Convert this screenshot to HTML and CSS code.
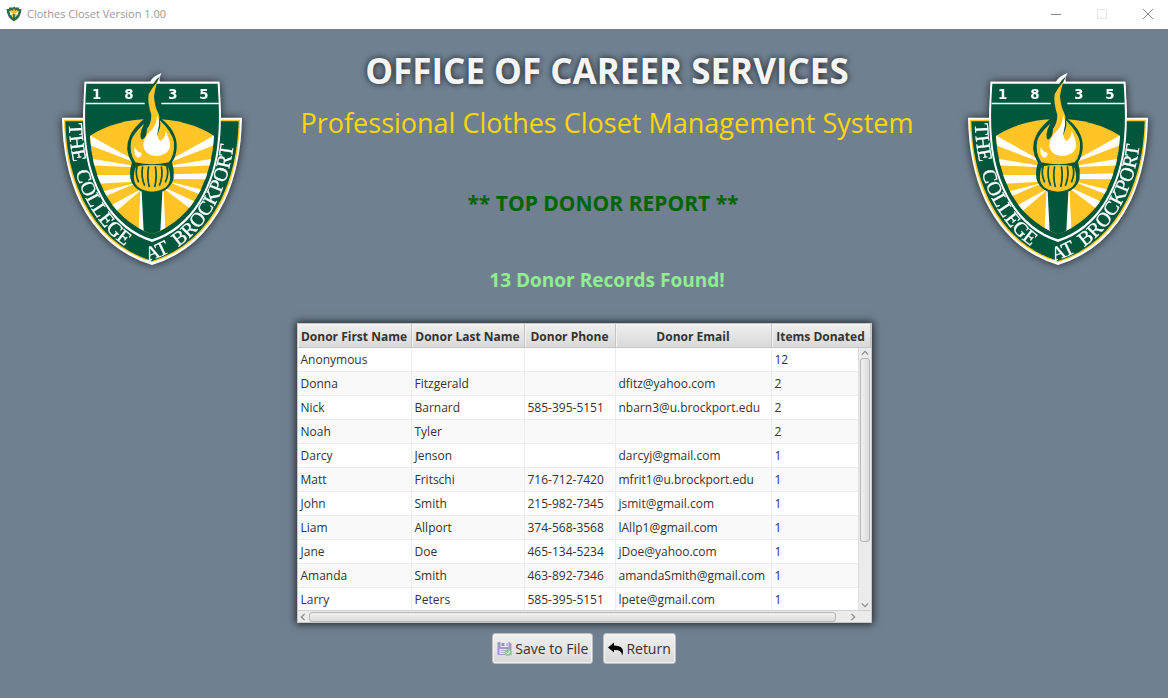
FILE: index.html
```html
<!DOCTYPE html>
<html lang="en">
<head>
<meta charset="utf-8">
<title>Clothes Closet Version 1.00</title>
<link rel="stylesheet" href="styles.css">
</head>
<body>
<svg class="defs" aria-hidden="true">
  <defs>
    <clipPath id="field"><path d="M120 212Q200 162 306 162T492 212Q488 300 452 375Q405 470 306 508Q207 470 160 375Q124 300 120 212Z"/></clipPath>
    <path id="ribbon" d="M56 172C62 290 85 385 150 470C195 530 245 563 306 584C367 563 417 530 462 470C527 385 550 290 557 172"/>
    <symbol id="crest" viewBox="0 0 600 630">
      <path class="white" d="M36 158H100L104 50H300Q306 36 334 24Q326 44 330 50H508L513 158H576Q574 300 524 408Q452 556 306 600Q160 556 88 408Q38 300 36 158Z"/>
      <path class="gold" d="M42 164H570Q568 300 518 406Q448 548 306 592Q164 548 94 406Q44 300 42 164Z"/>
      <path class="green" d="M46 169H566Q563 300 513 404Q444 544 306 588Q168 544 99 404Q49 300 46 169Z"/>
      <path class="white" d="M104 50H508Q516 160 510 220Q502 330 450 415Q396 503 306 531Q216 503 162 415Q110 330 102 220Q96 160 104 50Z"/>
      <path class="green" d="M109 56H503Q510 160 504 220Q496 328 446 410Q392 495 306 523Q220 495 166 410Q116 328 108 220Q102 160 109 56Z"/>
      <path class="white" d="M107 113H284V118H107ZM334 113H506V118H334Z"/>
      <g clip-path="url(#field)">
        <path class="gold" d="M100 150H510V520H100Z"/>
        <path class="white" d="M290 306L110 206V237ZM290 308L110 279V300ZM250 330V350L130 357V330ZM265 352L140 384L152 400ZM285 365L168 430L190 446ZM272 365L265 510H284L280 365ZM322 306L502 206V237ZM322 308L502 279V300ZM362 328V342L482 343V325ZM347 347L472 378L464 394ZM327 360L452 418L430 438ZM340 365L347 510H328L332 365Z"/>
        <path class="green" d="M274 360H338L330 520H282Z"/>
      </g>
      <path class="green" d="M246 294Q220 252 240 212Q250 190 284 160L292 110Q288 78 308 60Q314 46 330 34L314 66Q308 82 320 110Q330 128 332 160Q384 200 380 250Q378 276 366 292Q374 316 371 340Q361 382 306 387Q251 382 241 340Q238 312 246 294Z"/>
      <path class="gold" d="M256 292Q236 264 244 226Q250 206 282 176Q264 214 276 224Q290 220 291 192Q304 174 304 150Q292 112 296 88Q304 70 322 50Q314 74 312 94Q314 124 325 145Q334 166 318 187Q310 204 316 216Q324 212 326 198Q334 182 329 165Q366 200 372 232Q374 274 356 292Q306 304 256 292Z"/>
      <path class="white" d="M280 242Q280 218 304 196Q322 176 321 150Q332 170 324 194Q318 220 332 228Q346 220 347 198Q364 234 359 250Q348 273 317 273Q284 270 280 242ZM254 246Q262 262 275 264Q274 278 264 278Q250 274 254 246Z"/>
      <path class="gold" d="M259 304Q306 296 353 304Q358 312 360 328Q366 376 306 380Q246 376 252 328Q254 312 259 304Z"/>
      <path class="ribs" d="M262 302Q254 326 266 352M278 304Q272 334 284 362M296 304Q290 334 298 366M316 304Q322 334 314 366M334 304Q340 334 328 362M350 302Q358 326 346 352"/>
      <g class="year"><text x="140" y="101">1</text><text x="237" y="101">8</text><text x="369" y="101">3</text><text x="462" y="101">5</text></g>
      <g class="motto">
        <text><textPath href="#ribbon" startOffset="4">THE</textPath></text>
        <text><textPath href="#ribbon" startOffset="150">COLLEGE</textPath></text>
        <text><textPath href="#ribbon" startOffset="500">AT</textPath></text>
        <text><textPath href="#ribbon" startOffset="602">BROCKPORT</textPath></text>
      </g>
    </symbol>
  </defs>
</svg>

<header class="titlebar">
  <svg class="app-icon" viewBox="0 0 16 16" aria-hidden="true"><path fill="#2c6b50" d="M3 1.500H7L8.500.5L9 1.500H13V3H15.500Q15 12 8 15.500Q1 12 .5 3H3Z"/><path fill="#f2c12e" d="M3.500 5Q8 2 12.500 5Q12 10 8 12.500Q4 10 3.500 5Z"/><path fill="#fff" d="M3.500 5L7 8L4.500 9ZM12.500 5L9 8L11.500 9Z"/><path fill="#0b5d43" d="M7.300 8H8.700V13H7.300ZM6.500 3H9.500V5H6.500Z"/><path fill="#f2c12e" d="M8 2L9.500 6Q9 8 8 8T6.500 6Z"/></svg>
  <span class="app-name">Clothes Closet Version 1.00</span>
  <div class="window-controls">
    <button type="button" aria-label="Minimize"><svg viewBox="0 0 12 12"><path stroke="#888" d="M1 6.500H11"/></svg></button>
    <button type="button" aria-label="Maximize" disabled><svg viewBox="0 0 12 12"><path stroke="#e4e4e4" d="M1.500 1.500H10.500V10.500H1.500Z"/></svg></button>
    <button type="button" aria-label="Close"><svg viewBox="0 0 12 12"><path stroke="#888" d="M1 1L11 11M11 1L1 11"/></svg></button>
  </div>
</header>

<main>
  <section class="banner">
    <svg class="crest" role="img" aria-label="College crest"><use href="#crest"/></svg>
    <div class="headings">
      <h1>OFFICE OF CAREER SERVICES</h1>
      <p class="system">Professional Clothes Closet Management System</p>
      <h2>** TOP DONOR REPORT **</h2>
      <p class="status">13 Donor Records Found!</p>
    </div>
    <svg class="crest" role="img" aria-label="College crest"><use href="#crest"/></svg>
  </section>

  <section class="panel">
    <div class="viewport">
      <table>
        <colgroup><col class="c-first"><col class="c-last"><col class="c-phone"><col class="c-email"><col class="c-items"></colgroup>
        <thead><tr><th>Donor First Name</th><th>Donor Last Name</th><th>Donor Phone</th><th>Donor Email</th><th>Items Donated</th></tr></thead>
        <tbody>
          <tr><td>Anonymous</td><td></td><td></td><td></td><td>12</td></tr>
          <tr><td>Donna</td><td>Fitzgerald</td><td></td><td>dfitz@yahoo.com</td><td>2</td></tr>
          <tr><td>Nick</td><td>Barnard</td><td>585-395-5151</td><td>nbarn3@u.brockport.edu</td><td>2</td></tr>
          <tr><td>Noah</td><td>Tyler</td><td></td><td></td><td>2</td></tr>
          <tr><td>Darcy</td><td>Jenson</td><td></td><td>darcyj@gmail.com</td><td>1</td></tr>
          <tr><td>Matt</td><td>Fritschi</td><td>716-712-7420</td><td>mfrit1@u.brockport.edu</td><td>1</td></tr>
          <tr><td>John</td><td>Smith</td><td>215-982-7345</td><td>jsmit@gmail.com</td><td>1</td></tr>
          <tr><td>Liam</td><td>Allport</td><td>374-568-3568</td><td>lAllp1@gmail.com</td><td>1</td></tr>
          <tr><td>Jane</td><td>Doe</td><td>465-134-5234</td><td>jDoe@yahoo.com</td><td>1</td></tr>
          <tr><td>Amanda</td><td>Smith</td><td>463-892-7346</td><td>amandaSmith@gmail.com</td><td>1</td></tr>
          <tr><td>Larry</td><td>Peters</td><td>585-395-5151</td><td>lpete@gmail.com</td><td>1</td></tr>
        </tbody>
      </table>
      <div class="scroll vertical">
        <svg viewBox="0 0 10 6"><path d="M1 5L5 1L9 5"/></svg>
        <div class="track"><div class="thumb"></div></div>
        <svg viewBox="0 0 10 6"><path d="M1 1L5 5L9 1"/></svg>
      </div>
    </div>
    <div class="scroll horizontal">
      <svg viewBox="0 0 6 10"><path d="M5 1L1 5L5 9"/></svg>
      <div class="track"><div class="thumb"></div></div>
      <svg viewBox="0 0 6 10"><path d="M1 1L5 5L1 9"/></svg>
    </div>
  </section>

  <div class="actions">
    <button type="button"><svg class="icon" viewBox="0 0 14 14" aria-hidden="true"><path fill="#a596c8" d="M0 0H12L14 2V13H0Z"/><path fill="#e9e5f3" d="M3 0H11V5H3ZM2 7H12V12H2Z"/><path fill="#8b98ad" d="M4 1H10V4H4Z"/><path fill="#e9edf3" d="M7 1H9V4H7Z"/><path stroke="#b3a9cc" d="M3 8.500H11M3 10.500H8"/><circle cx="10.500" cy="10.500" r="3.500" fill="#8fca98"/><path fill="none" stroke="#fff" d="M9 10.500L10.300 12L12.300 9.300"/></svg>Save to File</button>
    <button type="button"><svg class="icon" viewBox="0 0 15 13" aria-hidden="true"><path d="M0 5L6 0V3Q15 3 15 9Q15 11 14 13Q14 7 6 7.500V10Z"/></svg>Return</button>
  </div>
</main>
</body>
</html>
```
FILE: styles.css
```css
* { box-sizing: border-box; }
body {
  margin: 0;
  min-height: 100vh;
  background: #708090;
  color: #333;
  font: 12px/24px "Open Sans", "Noto Sans", sans-serif;
}
button { font: inherit; color: inherit; }
.defs { position: absolute; width: 0; height: 0; }

.titlebar {
  display: flex;
  align-items: center;
  height: 29px;
  padding: 0 0 2px 6px;
  background: #fff;
  color: #999;
  font-size: 11px;
}
.app-icon { width: 16px; height: 16px; }
.app-name { margin: 0 auto 0 5px; }
.window-controls { display: flex; gap: 6px; }
.window-controls button {
  display: flex;
  align-items: center;
  justify-content: center;
  width: 40px;
  height: 27px;
  padding: 0;
  border: 0;
  background: none;
}
.window-controls svg { width: 12px; height: 12px; fill: none; }

.banner {
  display: flex;
  justify-content: space-between;
  padding: 18px 12px 0 50px;
}
.crest {
  flex: none;
  width: 200px;
  height: 210px;
  margin-top: 18px;
  filter: drop-shadow(0 0 4px rgba(0, 0, 0, .7));
}
.white { fill: #fff; }
.gold { fill: #ffc425; }
.green { fill: #00573c; }
.ribs { fill: none; stroke: #00573c; stroke-width: 5; }
.year { fill: #fff; font: bold 40px "DejaVu Sans", sans-serif; text-anchor: middle; }
.motto { fill: #fff; stroke: #fff; stroke-width: 1; font: 60px "Liberation Serif", serif; }

.headings { padding-left: 8px; text-align: center; }
h1, h2, p { margin: 0; }
h1 {
  color: #f5f5f5;
  font-size: 35px;
  line-height: 48px;
  text-shadow: 0 0 6px rgba(0, 0, 0, .8);
}
.system { margin-top: 8px; color: gold; font-size: 27px; line-height: 40px; }
h2 { margin: 44px 8px 0 0; color: darkgreen; font-size: 21px; line-height: 32px; }
.status { margin-top: 46px; color: lightgreen; font-size: 19px; font-weight: bold; line-height: 30px; }

.panel {
  width: 575px;
  max-width: 100%;
  margin: 28px auto 0;
  border: 1px solid #c8c8c8;
  background: #e8e8e8;
  box-shadow: 0 0 8px 1px rgba(0, 0, 0, .75);
}
.viewport { position: relative; height: 286px; overflow: hidden; }
table { width: 100%; border-collapse: separate; border-spacing: 0; table-layout: fixed; }
.c-first { width: 20%; }
.c-last { width: 113px; }
.c-phone { width: 91px; }
.c-email { width: 156px; }
.c-items { width: 99px; }
th, td { height: 24px; padding: 0 3px; border-right: 1px solid #ededed; line-height: 23px; text-align: left; white-space: nowrap; }
th {
  padding: 2px 0 0;
  border-right-color: #c4c4c4;
  border-bottom: 1px solid #c4c4c4;
  background: linear-gradient(#efefef, #d9d9d9);
  box-shadow: inset 1px 1px #f4f4f4;
  line-height: 21px;
  text-align: center;
}
td { border-bottom: 1px solid #ededed; background: #fff; }
tr:nth-child(even) td { background: #f9f9f9; }

.scroll { display: flex; align-items: center; background: #ebebeb; }
.scroll svg { flex: none; fill: none; stroke: #888; stroke-width: 1.5; }
.track { flex: 1; display: flex; }
.thumb { border: 1px solid #b5b5b5; border-radius: 3px; }
.vertical {
  position: absolute;
  inset: 24px 0 0 auto;
  flex-direction: column;
  width: 13px;
  padding: 2px 0;
  border-left: 1px solid #ddd;
}
.vertical svg { width: 8px; height: 6px; }
.vertical .track { padding: 2px 0; }
.vertical .thumb { width: 10px; height: 76%; background: linear-gradient(90deg, #f0f0f0, #dcdcdc); }
.horizontal { height: 12px; padding: 0 15px 0 2px; border-top: 1px solid #d0d0d0; }
.horizontal svg { width: 6px; height: 8px; }
.horizontal .track { padding: 0 3px; }
.horizontal .thumb { width: 98%; height: 10px; background: linear-gradient(#f0f0f0, #dcdcdc); }

.actions { display: flex; justify-content: center; gap: 10px; margin-top: 10px; }
.actions button {
  display: flex;
  align-items: center;
  gap: 3px;
  height: 31px;
  padding: 0 4px;
  border: 1px solid #bdbdbd;
  border-radius: 3px;
  background: linear-gradient(#f0f0f0, #dadada);
  box-shadow: inset 0 0 0 1px #f2f2f2;
  font-size: 14px;
}
.icon { width: 15px; height: 14px; }
```
